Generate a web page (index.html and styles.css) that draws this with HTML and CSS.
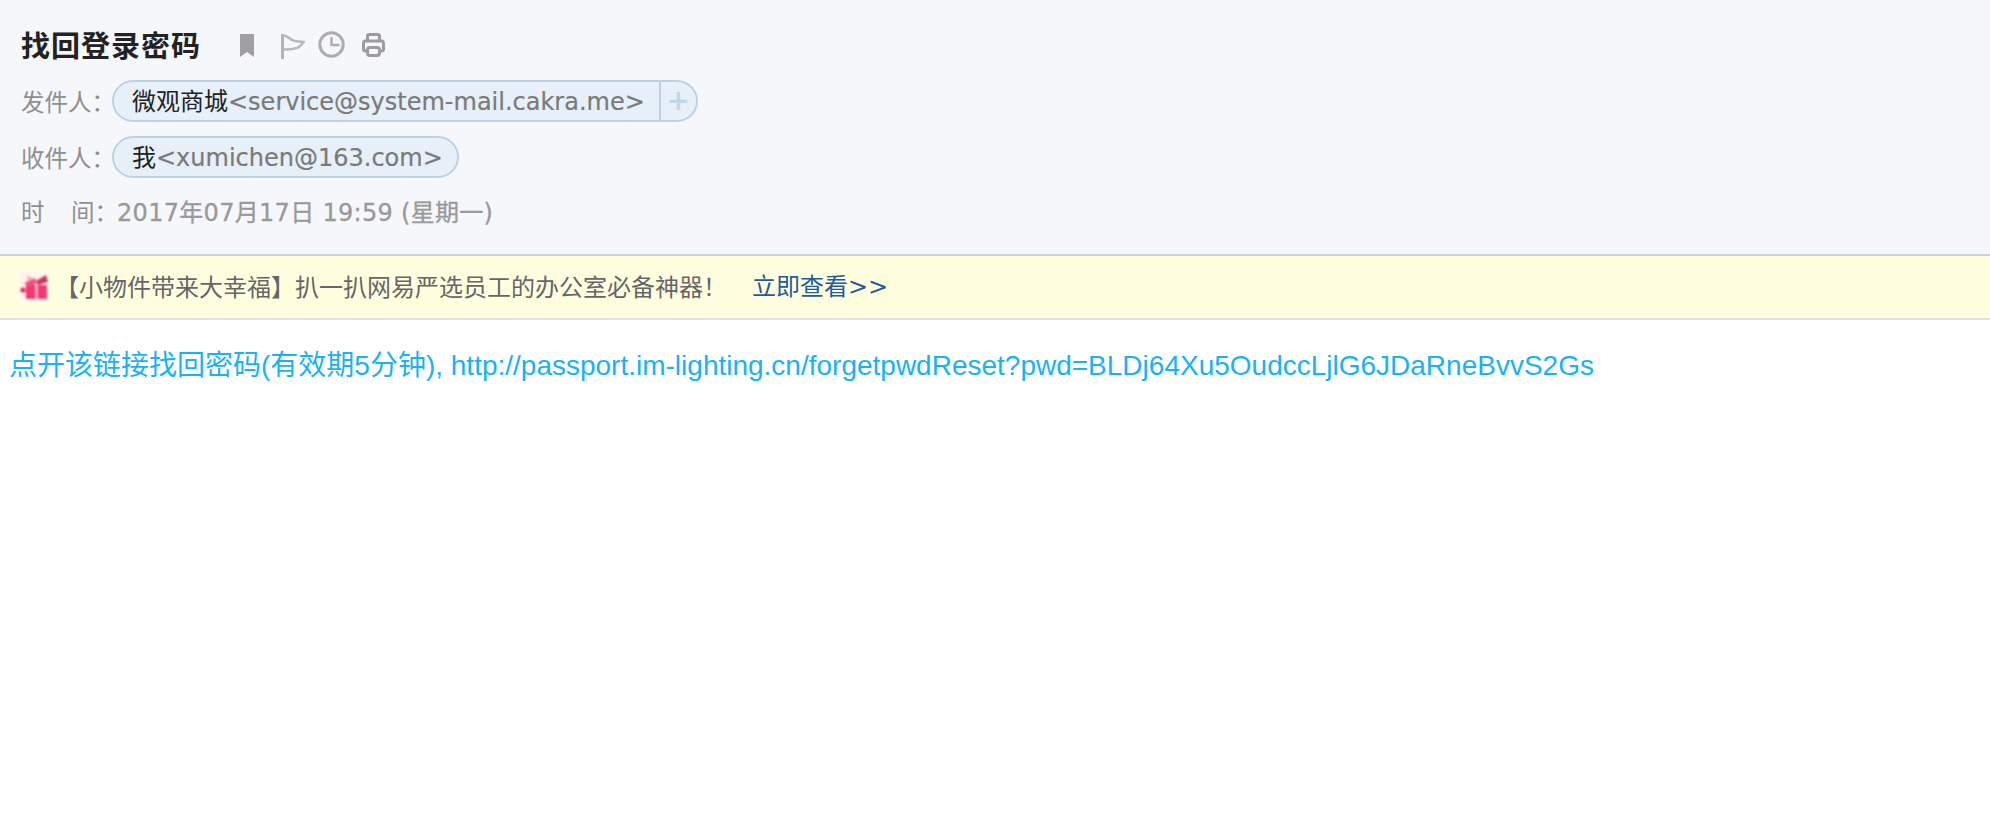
FILE: index.html
```html
<!DOCTYPE html>
<html lang="zh">
<head>
<meta charset="utf-8">
<title>找回登录密码</title>
<link rel="stylesheet" href="styles.css">
</head>
<body>
<header class="head">
  <div class="title-row">
    <h1 class="title">找回登录密码</h1>
    <div class="tools">
      <svg class="ic-bookmark" width="14" height="23" viewBox="0 0 14 23"><path d="M0 0H14V23L7 18L0 23Z" fill="#a0a0a2"/></svg>
      <svg class="ic-flag" width="24" height="25" viewBox="0 0 24 25"><path d="M1.500 0V25" stroke="#b4b4b4" stroke-width="3" fill="none"/><path d="M2 1.500C6 1.500 8 4 11 6C14 8 18 7 22.500 8C20.500 11 18 14 14 14.500C10 15.500 6 15.500 2 15.500" stroke="#b8b8b8" stroke-width="2.400" fill="none"/></svg>
      <svg class="ic-clock" width="27" height="27" viewBox="0 0 27 27"><circle cx="13.500" cy="13.500" r="11.700" stroke="#adadad" stroke-width="3" fill="none"/><path d="M13.500 6V14H21.500" stroke="#adadad" stroke-width="2.400" fill="none"/></svg>
      <svg class="ic-print" width="23" height="24" viewBox="0 0 23 24"><path d="M5.500 8V3C5.500 2 6.200 1.500 7.200 1.500H15.800C16.800 1.500 17.500 2 17.500 3V8" stroke="#9c9c9e" stroke-width="3" fill="none"/><path d="M4 18H3.500C2 18 1.500 17.200 1.500 16V10.500C1.500 9 2 8 3.500 8H19.500C21 8 21.500 9 21.500 10.500V16C21.500 17.200 21 18 19.500 18H19" stroke="#9c9c9e" stroke-width="3" fill="none"/><rect x="5.500" y="14.500" width="12" height="8" rx="2.400" stroke="#9c9c9e" stroke-width="3" fill="none"/></svg>
    </div>
  </div>
  <div class="row">
    <span class="label">发件人：</span>
    <span class="pill"><span class="pill-main"><span class="name">微观商城</span><span class="addr">&lt;service@system-mail.cakra.me&gt;</span></span><span class="pill-add">+</span></span>
  </div>
  <div class="row">
    <span class="label">收件人：</span>
    <span class="pill"><span class="pill-main"><span class="name">我</span><span class="addr">&lt;xumichen@163.com&gt;</span></span></span>
  </div>
  <div class="row row-time">
    <span class="label label-time"><span class="label-gap">时</span>间：</span>
    <span class="time">2017年07月17日 19:59 (星期一)</span>
  </div>
</header>
<div class="banner">
  <svg class="gift" width="28" height="28" viewBox="0 0 28 28">
    <rect width="28" height="28" fill="#fff4ef"/>
    <path d="M6 13H27V27H6Z" fill="#f2386f"/>
    <path d="M15 13H18V27H15Z" fill="#ffa8c0"/>
    <path d="M4 11L15 6L17 11L9 15Z" fill="#e9537f"/>
    <path d="M16 9L26 3L28 10L18 13Z" fill="#c9345f"/>
    <circle cx="3" cy="18" r="2.600" fill="#d92c5a"/>
    <path d="M7 3L14 7L8 9Z" fill="#f5a9bd"/>
  </svg>
  <span class="promo">【小物件带来大幸福】扒一扒网易严选员工的办公室必备神器！</span>
  <a class="promo-link" href="#">立即查看&gt;&gt;</a>
</div>
<main class="content">
  <p class="message">点开该链接找回密码(有效期5分钟), http://passport.im-lighting.cn/forgetpwdReset?pwd=BLDj64Xu5OudccLjlG6JDaRneBvvS2Gs</p>
</main>
</body>
</html>
```
FILE: styles.css
```css
* { box-sizing: border-box; }
html, body { margin: 0; padding: 0; background: #fff; }
body { font-family: "DejaVu Sans", "Noto Sans CJK SC", sans-serif; }
.head { height: 256px; background: #f5f7fb; border-bottom: 2px solid #c8d3d8; padding: 25px 0 0 21px; }
.title-row { display: flex; align-items: center; height: 38px; }
.title { margin: 0; font: 700 29px/38px "Noto Sans CJK SC", sans-serif; letter-spacing: 1px; color: #222; width: 219px; }
.tools { display: flex; align-items: center; margin-top: 2px; }
.ic-bookmark { margin-right: 27px; }
.ic-flag { margin-right: 13px; margin-top: 2px; }
.ic-clock { margin-right: 17px; margin-top: -2px; }
.row { display: flex; align-items: center; height: 42px; margin-top: 14px; }
.row:nth-child(2) { margin-top: 17px; }
.row-time { height: 40px; margin-top: 14px; }
.label { width: 91px; flex: none; font: 400 23.500px/38px "Noto Sans CJK SC", sans-serif; color: #8f8f8f; white-space: nowrap; }
.label-time { padding-bottom: 2px; }
.label-gap { display: inline-block; width: 50px; }
.pill { display: inline-flex; height: 42px; background: #e7f0f8; border: 2px solid #bed1e3; border-radius: 21px; }
.pill-main { display: flex; align-items: center; padding: 0 14px 0 18px; white-space: nowrap; }
.name { font: 400 24px/36px "Noto Sans CJK SC", sans-serif; color: #222; padding-bottom: 2px; }
.addr { font: 400 24px/38px "DejaVu Sans", sans-serif; color: #7a7a7a; -webkit-text-stroke: 0.2px #7a7a7a; padding-top: 1px; }
.pill-add { width: 37px; border-left: 2px solid #bed1e3; text-align: center; font: 700 28px/38px "DejaVu Sans", sans-serif; color: #c3d6e8; }
.time { font: 400 24px/40px "DejaVu Sans", "Noto Sans CJK SC", sans-serif; letter-spacing: 0.3px; color: #999; -webkit-text-stroke: 0.3px #999; white-space: nowrap; margin-left: 5px; padding-top: 2px; }
.banner { display: flex; align-items: center; height: 64px; background: #ffffe0; border-bottom: 2px solid #e0e1e7; padding-left: 20px; padding-bottom: 2px; }
.gift { margin-right: 7px; filter: blur(0.8px); }
.promo { font: 400 24px/32px "Noto Sans CJK SC", sans-serif; color: #666; white-space: nowrap; width: 697px; }
.promo-link { font: 400 24px/34px "DejaVu Sans", "Noto Sans CJK SC", sans-serif; color: #1f5c99; text-decoration: none; white-space: nowrap; padding-top: 2px; }
.content { padding: 28px 9px; }
.message { margin: 0; font: 400 28px/36px "Liberation Sans", "Noto Sans CJK SC", sans-serif; color: #1ab2f5; white-space: nowrap; }
```
